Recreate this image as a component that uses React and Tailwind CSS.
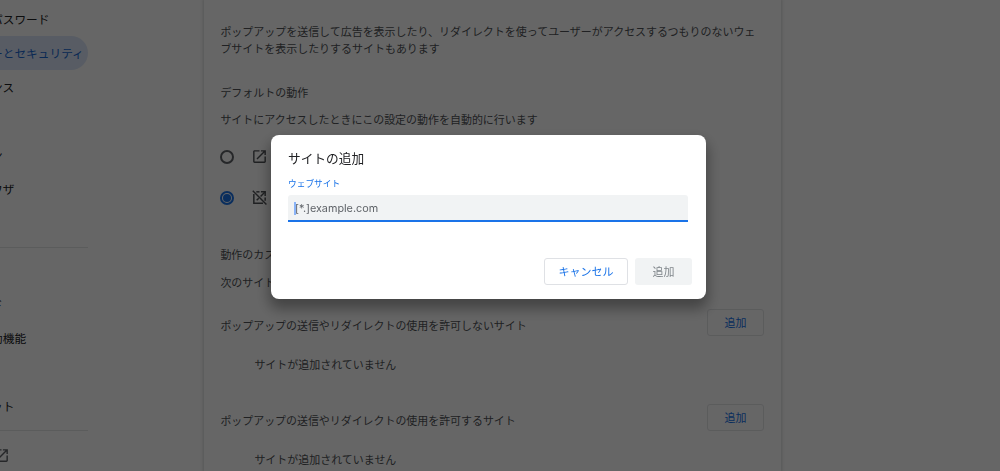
import { useState } from "react";
import clsx from "clsx";

const primaryNav = [
    { id: "passwords", label: "パスワード" },
    { id: "privacy", label: "ーとセキュリティ" },
    { id: "performance", label: "ンス" },
    { id: "appearance", label: "" },
    { id: "search", label: "ン" },
    { id: "browser", label: "ウザ" },
    { id: "startup", label: "" },
];

const secondaryNav = [
    { id: "languages", label: "" },
    { id: "downloads", label: "ド" },
    { id: "accessibility", label: "助機能" },
    { id: "system", label: "" },
    { id: "reset", label: "ット" },
];

const siteLists = [
    { id: "blocked", title: "ポップアップの送信やリダイレクトの使用を許可しないサイト" },
    { id: "allowed", title: "ポップアップの送信やリダイレクトの使用を許可するサイト" },
];

function OpenInNewIcon({ className }) {
    return (
        <svg viewBox="0 0 24 24" fill="currentColor" className={className}>
            <path d="M19 19H5V5h7V3H5c-1.1 0-2 .9-2 2v14c0 1.1.9 2 2 2h14c1.1 0 2-.9 2-2v-7h-2v7zM14 3v2h3.59l-9.83 9.83 1.41 1.41L19 6.41V10h2V3h-7z" />
        </svg>
    );
}

function OpenInNewOffIcon({ className }) {
    return (
        <svg viewBox="0 0 24 24" fill="none" stroke="currentColor" strokeWidth="2.1" className={className}>
            <path d="M2.5 2.5 21.8 21.8" />
            <path d="M4 7v13h13" />
            <path d="M7.5 4H12" />
            <path d="M20 12v4.5" />
            <path d="M14 4h6v6" />
            <path d="M20 4l-6.5 6.5" />
            <path d="M8 16l3-3" />
        </svg>
    );
}

function NavItem({ label, active }) {
    return (
        <div
            className={clsx(
                "flex h-[34px] items-center rounded-r-full whitespace-nowrap",
                active ? "bg-[#dce7f9] text-[#1967d2]" : "text-[#202124]"
            )}
        >
            <span className="-ml-[9px]">{label}</span>
        </div>
    );
}

function Radio({ checked, onClick }) {
    return (
        <button
            onClick={onClick}
            className={clsx(
                "flex size-[14px] items-center justify-center rounded-full border-2",
                checked ? "border-[#1a73e8]" : "border-[#5f6368]"
            )}
        >
            {checked && <span className="size-2 rounded-full bg-[#1a73e8]" />}
        </button>
    );
}

function Sidebar() {
    return (
        <nav className="w-[88px] shrink-0 overflow-hidden pt-0.5 text-[11.7px]">
            {primaryNav.map((item) => (
                <NavItem key={item.id} label={item.label} active={item.id === "privacy"} />
            ))}
            <div className="mt-[7px] mb-[5px] border-t border-[#e4e5e7]" />
            {secondaryNav.map((item) => (
                <NavItem key={item.id} label={item.label} />
            ))}
            <div className="mt-[7px] border-t border-[#e4e5e7]" />
            <OpenInNewIcon className="mt-4 -ml-[7px] size-[17px] text-[#5f6368]" />
        </nav>
    );
}

function SiteList({ title }) {
    return (
        <section className="h-[95px]">
            <div className="flex h-[27px] items-center justify-between">
                <h3 className="pt-[6px] text-[10.94px]">{title}</h3>
                <button className="h-[27px] w-[57px] rounded-[3px] border border-[#e4e5e7] text-[#1a73e8]">
                    追加
                </button>
            </div>
            <p className="mt-5 ml-[34px] leading-[17px]">サイトが追加されていません</p>
        </section>
    );
}

function AddSiteDialog() {
    const [site, setSite] = useState("");

    return (
        <div className="fixed inset-0 flex justify-center bg-black/60 pt-[135px] pr-[23px]">
            <div className="h-[164px] w-[435px] rounded-lg bg-white px-[17px] pt-[14px] shadow-[0_8px_14px_2px_rgba(0,0,0,0.35)]">
                <h2 className="text-[12.7px] leading-[18px] text-[#202124]">サイトの追加</h2>
                <label className="mt-[9px] block pt-px text-[8.7px] leading-[14px] text-[#1a73e8]">ウェブサイト</label>
                <div className="mt-1 flex h-[27px] w-[400px] items-center rounded-t-[3px] border-b-2 border-[#1a73e8] bg-[#f1f3f4] pl-[6px]">
                    <span className="mt-px h-[13px] w-0.5 bg-[#8ab4f8]" />
                    <input
                        value={site}
                        onChange={(e) => setSite(e.target.value)}
                        placeholder="[*.]example.com"
                        className="-ml-px w-[360px] bg-transparent pt-[3px] font-['Inter'] text-[10.8px] outline-none placeholder:text-[#5f6368]"
                    />
                </div>
                <div className="-mr-[3px] mt-9 flex justify-end gap-[7px]">
                    <button className="h-[27px] w-[84px] rounded-[3px] border border-[#dfe1e5] text-[#1a73e8]">
                        キャンセル
                    </button>
                    <button disabled className="h-[27px] w-[57px] rounded-[3px] bg-[#f1f3f4] text-[#80868b]">
                        追加
                    </button>
                </div>
            </div>
        </div>
    );
}

export default function App() {
    const [allowed, setAllowed] = useState(false);

    return (
        <div className="flex h-[471px] w-[1000px] overflow-hidden bg-white font-['Noto_Sans_CJK_JP',sans-serif] text-[10.98px] text-[#505357]">
            <Sidebar />

            <main className="ml-[116px] w-[577px] shrink-0 pt-[23px] pr-[17px] pl-[16.4px] shadow-[0_0_3px_1px_rgba(60,64,67,0.2)]">
                <p className="leading-[17px] whitespace-nowrap">
                    ポップアップを送信して広告を表示したり、リダイレクトを使ってユーザーがアクセスするつもりのないウェ
                    <br />
                    ブサイトを表示したりするサイトもあります
                </p>
                <h2 className="mt-[27px] leading-[17px]">デフォルトの動作</h2>
                <p className="mt-[10px] leading-[17px]">サイトにアクセスしたときにこの設定の動作を自動的に行います</p>

                <div className="mt-2 flex h-[41px] items-center gap-[17px]">
                    <Radio checked={allowed} onClick={() => setAllowed(true)} />
                    <OpenInNewIcon className="size-[17px]" />
                </div>
                <div className="flex h-[41px] items-center gap-[17px]">
                    <Radio checked={!allowed} onClick={() => setAllowed(false)} />
                    <OpenInNewOffIcon className="size-[17px]" />
                </div>

                <h2 className="mt-7 leading-[17px]">動作のカス</h2>
                <p className="mt-[11px] mb-[18px] leading-[17px]">次のサイト</p>

                {siteLists.map((list) => (
                    <SiteList key={list.id} title={list.title} />
                ))}
            </main>

            <AddSiteDialog />
        </div>
    );
}
